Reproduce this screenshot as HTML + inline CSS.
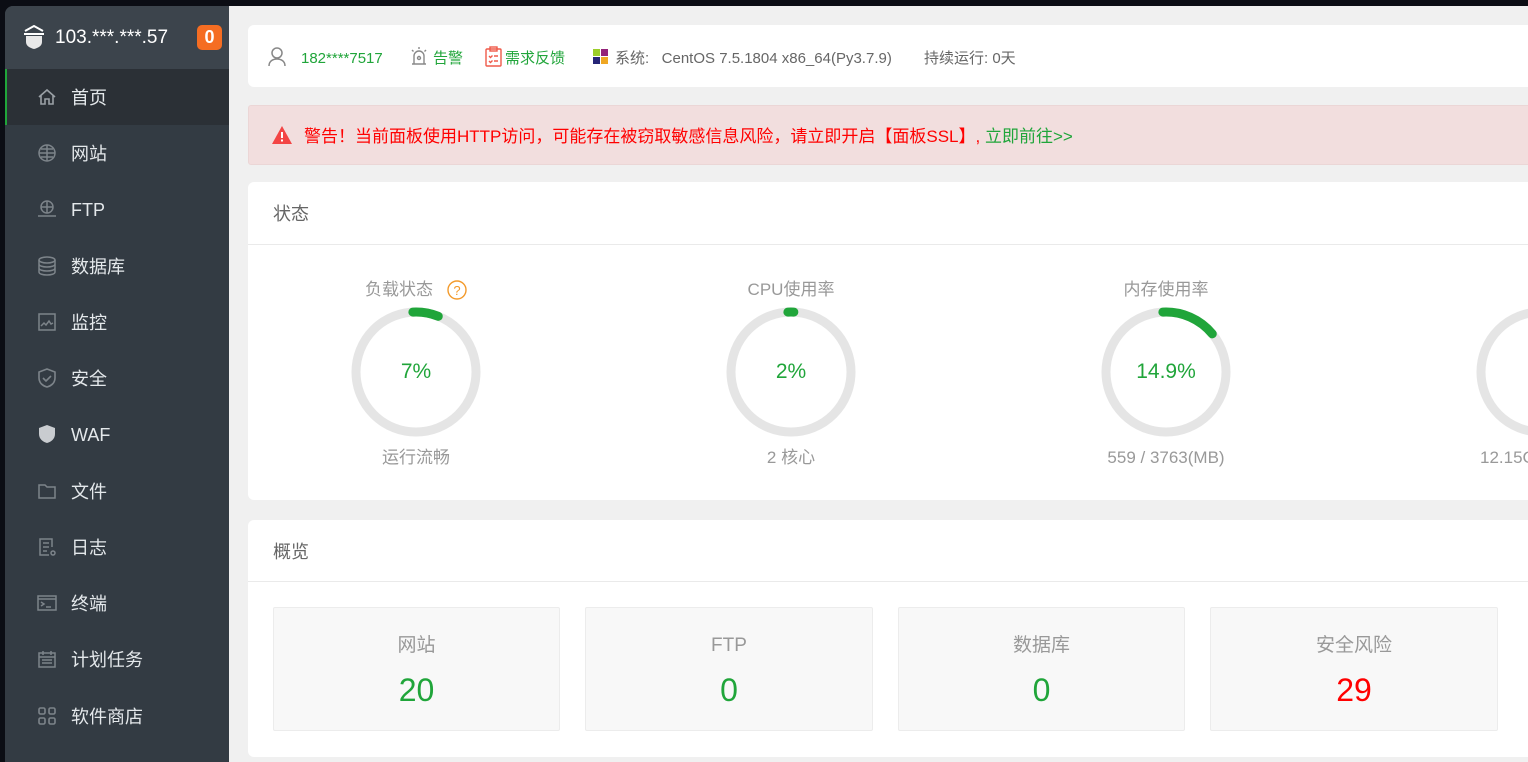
<!DOCTYPE html>
<html><head><meta charset="utf-8">
<style>
*{margin:0;padding:0;box-sizing:border-box}
body{width:1528px;height:762px;overflow:hidden;background:#0b0d14;font-family:"Liberation Sans","Noto Sans CJK SC",sans-serif;position:relative}
.abs{position:absolute}
#side{left:5px;top:6px;width:224px;height:756px;background:#333b43;border-top-left-radius:8px;overflow:hidden}
#shead{left:0;top:0;width:224px;height:63px;background:#3c444c}
#ip{left:50px;top:19px;color:#fff;font-size:19px;line-height:26px}
#badge{left:192px;top:19px;width:25px;height:25px;background:#f56d22;border-radius:5px;color:#fff;font-weight:bold;font-size:18px;text-align:center;line-height:25px}
.it{position:absolute;left:0;width:224px;height:56px}
.it span{position:absolute;left:66px;top:1px;line-height:56px;font-size:18px;color:#e4e8eb}
.it svg{position:absolute;left:32px;top:18px}
.act{background:#2b3036}
.act:before{content:"";position:absolute;left:0;top:0;width:2px;height:56px;background:#20a53a}
#main{left:229px;top:6px;width:1299px;height:756px;background:#f0f0f0}
.card{position:absolute;background:#fff;border-radius:6px}
.g{position:absolute;width:200px;text-align:center;line-height:24px}
.gt{font-size:17px;color:#999}
.gb{font-size:17px;color:#999}
.box{position:absolute;top:87px;height:124px;background:#f8f8f8;border:1px solid #ececec;border-radius:2px;text-align:center}
.box .l{position:absolute;left:0;right:0;top:25px;line-height:26px;font-size:19px;color:#999}
.box .v{position:absolute;left:0;right:0;top:62px;line-height:40px;font-size:32px;color:#20a53a}
.tb{position:absolute;top:3px;line-height:62px}
</style></head><body>
<div id="side" class="abs">
 <div id="shead" class="abs">
  <svg class="abs" style="left:18px;top:19px" width="22" height="25" viewBox="0 0 22 25"><path d="M2 6 L11 1 L20 6" stroke="#fff" stroke-width="2" fill="none"/><path d="M1 9h20" stroke="#fff" stroke-width="2"/><path d="M3 11h16v6c0 4-4 6-8 7-4-1-8-3-8-7z" fill="#e8e8e8"/></svg>
  <div id="ip" class="abs">103.***.***.57</div>
  <div id="badge" class="abs">0</div>
 </div>
 <div class="it act" style="top:63px"><svg width="20" height="20" viewBox="0 0 20 20" fill="none" stroke="#9aa0a6" stroke-width="1.6"><path d="M2 10L10 3l8 7M4 8v9h4v-5h4v5h4V8"/></svg><span>首页</span></div>
 <div class="it" style="top:119px"><svg width="20" height="20" viewBox="0 0 20 20" fill="none" stroke="#7d848a" stroke-width="1.5"><circle cx="10" cy="10" r="8"/><path d="M2 10h16M10 2v16M4 6h12M4 14h12"/></svg><span>网站</span></div>
 <div class="it" style="top:175px"><svg width="20" height="20" viewBox="0 0 20 20" fill="none" stroke="#7d848a" stroke-width="1.5"><circle cx="10" cy="8" r="6"/><path d="M4 8h12M10 2v12M1 17h18"/></svg><span>FTP</span></div>
 <div class="it" style="top:232px"><svg width="20" height="20" viewBox="0 0 20 20" fill="none" stroke="#7d848a" stroke-width="1.5"><ellipse cx="10" cy="4" rx="8" ry="3"/><path d="M2 4v12c0 2 4 3 8 3s8-1 8-3V4M2 8c0 2 4 3 8 3s8-1 8-3M2 12c0 2 4 3 8 3s8-1 8-3"/></svg><span>数据库</span></div>
 <div class="it" style="top:288px"><svg width="20" height="20" viewBox="0 0 20 20" fill="none" stroke="#7d848a" stroke-width="1.5"><rect x="2" y="2" width="16" height="16"/><path d="M4 14l3-3 2 2 3-4 2 3 2-1"/></svg><span>监控</span></div>
 <div class="it" style="top:344px"><svg width="20" height="20" viewBox="0 0 20 20" fill="none" stroke="#7d848a" stroke-width="1.6"><path d="M10 1l8 3v6c0 5-4 8-8 9-4-1-8-4-8-9V4z"/><path d="M6 10l3 3 5-5"/></svg><span>安全</span></div>
 <div class="it" style="top:400px"><svg width="20" height="20" viewBox="0 0 20 20"><path d="M10 1l8 3v6c0 5-4 8-8 9-4-1-8-4-8-9V4z" fill="#c9ccd0"/></svg><span>WAF</span></div>
 <div class="it" style="top:457px"><svg width="20" height="20" viewBox="0 0 20 20" fill="none" stroke="#7d848a" stroke-width="1.5"><path d="M2 4h6l2 2h8v11H2z"/></svg><span>文件</span></div>
 <div class="it" style="top:513px"><svg width="20" height="20" viewBox="0 0 20 20" fill="none" stroke="#7d848a" stroke-width="1.5"><path d="M15 10V2H3v16h9M6 6h6M6 10h6M6 14h4"/><circle cx="16" cy="16" r="2"/></svg><span>日志</span></div>
 <div class="it" style="top:569px"><svg width="20" height="20" viewBox="0 0 20 20" fill="none" stroke="#7d848a" stroke-width="1.5"><rect x="1" y="3" width="18" height="14"/><path d="M1 6h18M4 9l3 2-3 2M9 14h5"/></svg><span>终端</span></div>
 <div class="it" style="top:625px"><svg width="20" height="20" viewBox="0 0 20 20" fill="none" stroke="#7d848a" stroke-width="1.5"><rect x="2" y="4" width="16" height="14"/><path d="M2 8h16M6 2v4M14 2v4M5 11h10M5 14h10"/></svg><span>计划任务</span></div>
 <div class="it" style="top:682px"><svg width="20" height="20" viewBox="0 0 20 20" fill="none" stroke="#7d848a" stroke-width="1.6"><rect x="2" y="2" width="6" height="6" rx="1.5"/><rect x="12" y="2" width="6" height="6" rx="1.5"/><rect x="2" y="12" width="6" height="6" rx="1.5"/><rect x="12" y="12" width="6" height="6" rx="1.5"/></svg><span>软件商店</span></div>
</div>

<div id="main" class="abs">
 <div class="card" style="left:19px;top:19px;width:1300px;height:62px;font-size:15px;color:#666">
  <svg class="abs" style="left:19px;top:21px" width="20" height="20" viewBox="0 0 20 20" fill="none" stroke="#888" stroke-width="1.5"><circle cx="10" cy="7" r="5"/><path d="M2 20c0-5 4-7 8-7s8 2 8 7"/></svg>
  <span class="tb" style="left:53px;color:#20a53a">182****7517</span>
  <svg class="abs" style="left:162px;top:21px" width="18" height="20" viewBox="0 0 18 20" fill="none" stroke="#888" stroke-width="1.4"><path d="M4 18V10a5 5 0 0110 0v8M2 18h14M9 1v2M2 4l1.5 1.5M16 4l-1.5 1.5"/><circle cx="9" cy="12" r="1.5"/></svg>
  <span class="tb" style="left:185px;color:#20a53a">告警</span>
  <svg class="abs" style="left:237px;top:21px" width="17" height="21" viewBox="0 0 17 21" fill="none" stroke="#ef5a4a" stroke-width="1.4"><rect x="1" y="3" width="15" height="17" rx="1"/><rect x="5" y="1" width="7" height="4"/><path d="M4 10l1.5 1.5 2-2M9 10h4M4 15l1.5 1.5 2-2M9 15h4"/></svg>
  <span class="tb" style="left:257px;color:#20a53a">需求反馈</span>
  <svg class="abs" style="left:344px;top:23px" width="17" height="17" viewBox="0 0 17 17"><rect x="1" y="1" width="7" height="7" fill="#9ccd2a"/><rect x="9" y="1" width="7" height="7" fill="#932279"/><rect x="1" y="9" width="7" height="7" fill="#262577"/><rect x="9" y="9" width="7" height="7" fill="#efa724"/></svg>
  <span class="tb" style="left:367px">系统:&nbsp;&nbsp; CentOS 7.5.1804 x86_64(Py3.7.9)</span>
  <span class="tb" style="left:676px">持续运行: 0天</span>
 </div>
 <div class="abs" style="left:19px;top:99px;width:1300px;height:60px;background:#f2dede;border:1px solid #ebd6d6;border-radius:3px;font-size:17px">
  <svg class="abs" style="left:22px;top:19px" width="22" height="20" viewBox="0 0 22 20"><path d="M11 1L21 19H1z" fill="#f34545"/><rect x="10" y="7" width="2" height="6" fill="#fff"/><rect x="10" y="14.5" width="2" height="2" fill="#fff"/></svg>
  <span class="abs" style="left:55px;top:2px;line-height:58px;color:#f00">警告！当前面板使用HTTP访问，可能存在被窃取敏感信息风险，请立即开启【面板SSL】, <span style="color:#20a53a">立即前往&gt;&gt;</span></span>
 </div>
 <div class="card" style="left:19px;top:176px;width:1300px;height:318px">
  <div class="abs" style="left:25px;top:20px;line-height:24px;font-size:18px;color:#666">状态</div>
  <div class="abs" style="left:0;top:62px;width:1300px;height:1px;background:#eaeaea"></div>
  <svg class="abs" style="left:0;top:0" width="1300" height="318">
   <g fill="none" stroke-width="9" stroke-linecap="round">
    <circle cx="168" cy="190" r="60" stroke="#e5e5e5"/>
    <circle cx="168" cy="190" r="60" stroke="#20a53a" stroke-dasharray="26 400" transform="rotate(-93 168 190)"/>
    <circle cx="543" cy="190" r="60" stroke="#e5e5e5"/>
    <circle cx="543" cy="190" r="60" stroke="#20a53a" stroke-dasharray="6 400" transform="rotate(-93 543 190)"/>
    <circle cx="918" cy="190" r="60" stroke="#e5e5e5"/>
    <circle cx="918" cy="190" r="60" stroke="#20a53a" stroke-dasharray="56 400" transform="rotate(-93 918 190)"/>
    <circle cx="1293" cy="190" r="60" stroke="#e5e5e5"/>
   </g>
   <circle cx="209" cy="108" r="9" fill="none" stroke="#f39a2c" stroke-width="1.4"/>
   <text x="209" y="113" font-size="13" fill="#f39a2c" text-anchor="middle" font-family="Liberation Sans">?</text>
  </svg>
  <div class="abs gt" style="left:117px;top:96px;line-height:24px">负载状态</div>
  <div class="g" style="left:68px;top:178px;font-size:21px;color:#20a53a">7%</div>
  <div class="g gb" style="left:68px;top:264px">运行流畅</div>
  <div class="g gt" style="left:443px;top:96px">CPU使用率</div>
  <div class="g" style="left:443px;top:178px;font-size:21px;color:#20a53a">2%</div>
  <div class="g gb" style="left:443px;top:264px">2 核心</div>
  <div class="g gt" style="left:818px;top:96px">内存使用率</div>
  <div class="g" style="left:818px;top:178px;font-size:21px;color:#20a53a">14.9%</div>
  <div class="g gb" style="left:818px;top:264px">559 / 3763(MB)</div>
  <div class="g" style="left:1193px;top:178px;font-size:21px;color:#20a53a">2</div>
  <div class="abs gb" style="left:1232px;top:264px;line-height:24px">12.15G</div>
 </div>
 <div class="card" style="left:19px;top:514px;width:1300px;height:237px">
  <div class="abs" style="left:25px;top:20px;line-height:24px;font-size:18px;color:#666">概览</div>
  <div class="abs" style="left:0;top:61px;width:1300px;height:1px;background:#eaeaea"></div>
  <div class="box" style="left:25px;width:287px"><div class="l">网站</div><div class="v">20</div></div>
  <div class="box" style="left:337px;width:288px"><div class="l">FTP</div><div class="v">0</div></div>
  <div class="box" style="left:650px;width:287px"><div class="l">数据库</div><div class="v">0</div></div>
  <div class="box" style="left:962px;width:288px"><div class="l">安全风险</div><div class="v" style="color:#f00">29</div></div>
 </div>
</div>
</body></html>
